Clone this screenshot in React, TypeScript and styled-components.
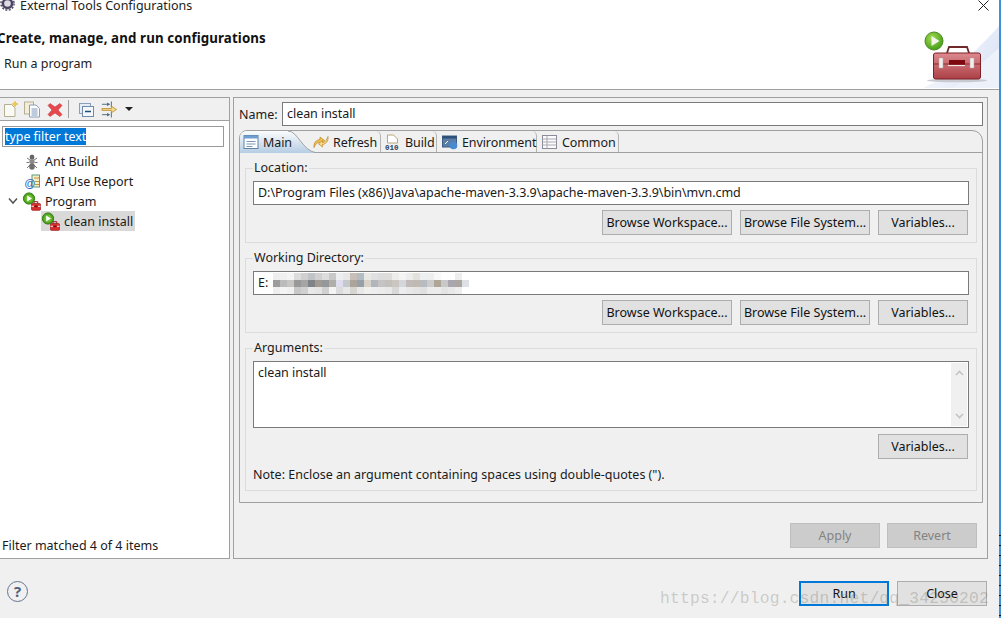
import React from "react";
import styled, { createGlobalStyle } from "styled-components";

const Global = createGlobalStyle`
  html, body { margin: 0; padding: 0; background: #f0f0f0; }
  body { font-family: "Noto Sans", "Open Sans", sans-serif; font-size: 12.5px; color: #1a1a1a; }
  * { box-sizing: border-box; }
`;

const Screen = styled.div`
  position: relative;
  width: 1001px;
  height: 618px;
  overflow: hidden;
  display: flex;
  background: #f0f0f0;
`;
const Win = styled.div`
  width: 999px;
  display: flex;
  flex-direction: column;
`;
const Edge = styled.div`
  width: 2px;
  display: flex;
  flex-direction: column;
  background: #3f8fd8;
`;
const EdgeTicks = styled.div`
  margin-top: auto;
  height: 92px;
  background: repeating-linear-gradient(#3f8fd8 0 9px, #111 9px 10px);
`;
const Banner = styled.header`
  position: relative;
  height: 90px;
  background: #fff;
  border-bottom: 1px solid #a0a0a0;
  display: flex;
  flex-direction: column;
`;
const TitleBar = styled.div`
  height: 11px;
  display: flex;
  align-items: center;
  gap: 5px;
  line-height: 11px;
  padding-right: 10px;
`;
const AppGlyph = styled.svg`
  width: 15px;
  height: 13px;
  flex: none;
`;
const WinTitle = styled.span`
  font-size: 12.5px;
  flex: 1;
  color: #222;
`;
const CloseGlyph = styled.svg`
  width: 11px;
  height: 11px;
`;
const Heading = styled.h1`
  margin: 18px 0 0 -3px;
  font-size: 13.3px;
  line-height: 18px;
  font-weight: 700;
  letter-spacing: 0.12px;
  color: #111;
`;
const Sub = styled.div`
  margin: 9px 0 0 4px;
  line-height: 16px;
  color: #222;
`;
const BannerArt = styled.svg`
  position: absolute;
  right: 0;
  bottom: 0;
  width: 76px;
  height: 65px;
`;
const Main = styled.main`
  flex: 1;
  min-height: 0;
  padding-top: 7px;
  display: flex;
  gap: 3px;
  padding-right: 11px;
`;
const LeftPanel = styled.section`
  width: 230px;
  display: flex;
  flex-direction: column;
  border: 1px solid #a0a0a0;
  border-left: none;
  background: #fff;
`;
const Toolbar = styled.div`
  height: 23px;
  background: #f0f0f0;
  border-bottom: 1px solid #a0a0a0;
  display: flex;
  align-items: center;
  padding: 0 0 0 3px;
  flex: none;
`;
const ToolIcon = styled.svg<{ $ml?: number; $w?: number }>`
  width: ${(p) => p.$w ?? 16}px;
  height: 18px;
  margin-left: ${(p) => p.$ml ?? 0}px;
  flex: none;
`;
const ToolSep = styled.div`
  width: 1px;
  height: 18px;
  background: #a0a0a0;
  margin: 0 10px 0 5px;
`;
const Caret = styled.div`
  width: 0;
  height: 0;
  margin-left: 7px;
  border-left: 4px solid transparent;
  border-right: 4px solid transparent;
  border-top: 4px solid #222;
`;
const FilterBox = styled.div`
  margin: 5px 5px 0 2px;
  height: 21px;
  border: 1px solid #999;
  display: flex;
  align-items: center;
  padding-left: 2px;
  flex: none;
`;
const FilterSel = styled.span`
  background: #0078d7;
  color: #fff;
  line-height: 17px;
  font-size: 12.4px;
`;
const Tree = styled.ul`
  list-style: none;
  margin: 4px 0 0;
  padding: 0;
  flex: 1;
`;
const Row = styled.li<{ $indent: number }>`
  height: 20px;
  padding-left: ${(p) => p.$indent}px;
  display: flex;
  align-items: center;
`;
const Pick = styled.span<{ $sel?: boolean }>`
  display: flex;
  align-items: center;
  gap: 4px;
  height: 20px;
  padding-right: 2px;
  background: ${(p) => (p.$sel ? "#d9d9d9" : "transparent")};
`;
const TreeGlyph = styled.svg`
  width: 19px;
  height: 19px;
  flex: none;
`;
const Twist = styled.svg`
  width: 10px;
  height: 8px;
  margin-right: 4px;
  flex: none;
`;
const FilterNote = styled.div`
  height: 25px;
  padding-left: 2px;
  line-height: 25px;
  flex: none;
`;
const RightPanel = styled.section`
  flex: 1;
  min-width: 0;
  border: 1px solid #a0a0a0;
  padding: 4px 4px 0 5px;
  display: flex;
  flex-direction: column;
`;
const NameRow = styled.div`
  display: flex;
  align-items: center;
  height: 24px;
`;
const NameLabel = styled.span`
  width: 43px;
  flex: none;
`;
const Field = styled.div`
  flex: 1;
  height: 24px;
  background: #fff;
  border: 1px solid #7a7a7a;
  padding-left: 4px;
  line-height: 21px;
  letter-spacing: -0.05px;
  overflow: hidden;
  position: relative;
  white-space: nowrap;
`;
const Folder = styled.div`
  margin-top: 4px;
  height: 373px;
  border: 1px solid #a0a0a0;
  border-radius: 8px 11px 0 0;
  display: flex;
  flex-direction: column;
  flex: none;
`;
const TabStrip = styled.div`
  height: 22px;
  flex: none;
  display: flex;
  border-bottom: 1px solid #a0a0a0;
`;
const ActiveTab = styled.div`
  position: relative;
  width: 72px;
  height: 22px;
  display: flex;
  align-items: center;
  gap: 4px;
  padding-left: 3px;
  flex: none;
`;
const ActiveShape = styled.svg`
  position: absolute;
  left: 0;
  top: -1px;
  width: 78px;
  height: 23px;
`;
const TabLabel = styled.span`
  position: relative;
  white-space: nowrap;
  letter-spacing: -0.1px;
`;
const Tab = styled.div<{ $w: number; $pad: number }>`
  position: relative;
  width: ${(p) => p.$w}px;
  height: 21px;
  display: flex;
  align-items: center;
  gap: 4px;
  padding: 1px 0 0 ${(p) => p.$pad}px;
  border-right: 1px solid #b4b4b4;
  border-top-right-radius: 5px;
  flex: none;
`;
const TabGlyph = styled.svg`
  position: relative;
  width: 16px;
  height: 16px;
  flex: none;
`;
const TabBody = styled.div`
  flex: 1;
  padding: 7px 5px 0;
  display: flex;
  flex-direction: column;
  gap: 7px;
`;
const Group = styled.fieldset`
  margin: 0;
  min-width: 0;
  border: 1px solid #dcdcdc;
  padding: 5px 7px 7px;
  display: block;
`;
const Legend = styled.legend`
  padding: 0 1px;
  line-height: 16px;
  height: 16px;
`;
const Buttons = styled.div<{ $mt?: number }>`
  display: flex;
  justify-content: flex-end;
  gap: 8px;
  margin-top: ${(p) => p.$mt ?? 5}px;
  padding-right: 1px;
`;
const Btn = styled.div<{ $w: number }>`
  width: ${(p) => p.$w}px;
  height: 25px;
  border: 1px solid #adadad;
  background: #e1e1e1;
  display: flex;
  align-items: center;
  justify-content: center;
  color: #111;
`;
const Disabled = styled(Btn)`
  background: #cccccc;
  border-color: #bfbfbf;
  color: #838383;
`;
const PrimaryBtn = styled(Btn)`
  border: 2px solid #0078d7;
`;
const Mosaic = styled.div`
  position: absolute;
  left: 19px;
  top: 1px;
  display: grid;
  grid-template-columns: repeat(28, 7px);
  grid-auto-rows: 7px;
`;
const Cell = styled.i<{ $c: string }>`
  display: block;
  background: ${(p) => p.$c};
`;
const ArgBox = styled.div`
  height: 67px;
  background: #fff;
  border: 1px solid #7a7a7a;
  display: flex;
`;
const ArgText = styled.div`
  flex: 1;
  padding: 2px 4px;
  line-height: 18px;
  letter-spacing: -0.05px;
`;
const Scroll = styled.div`
  width: 16px;
  margin: 1px 1px 1px 0;
  background: #f0f0f0;
  display: flex;
  flex-direction: column;
  justify-content: space-between;
  align-items: center;
  padding: 7px 0;
`;
const Chevron = styled.svg`
  width: 9px;
  height: 6px;
`;
const Note = styled.div`
  margin-top: 8px;
  line-height: 16px;
`;
const ApplyRow = styled.div`
  margin-top: 20px;
  padding-right: 6px;
  display: flex;
  justify-content: flex-end;
  gap: 7px;
`;
const Footer = styled.footer`
  height: 59px;
  flex: none;
  display: flex;
  padding: 22px 12px 0 6px;
`;
const Help = styled.div`
  width: 21px;
  height: 21px;
  margin-left: 1px;
  border-radius: 50%;
  border: 1.5px solid #66758f;
  color: #4f5f7d;
  font-weight: 700;
  font-size: 15px;
  line-height: 18px;
  text-align: center;
`;
const FooterBtns = styled.div`
  margin-left: auto;
  display: flex;
  gap: 8px;
  height: 26px;
`;
const Watermark = styled.div`
  position: absolute;
  left: 660px;
  top: 589px;
  font-size: 16.3px;
  line-height: 20px;
  letter-spacing: 0.2px;
  font-family: "Liberation Mono", monospace;
  color: rgba(110, 110, 95, 0.3);
  white-space: nowrap;
  pointer-events: none;
`;

const rows = [
  "#eee #f0f0f0 #f4f4f4 #dcdcdc #d0d0d0 #c0c4c8 #d0d0d0 #dcdcdc #c8c8c8 #eceef0 #e8e8e8 #c8c0b8 #b4bcc4 #e8e8e4 #e0e0e4 #dcdcdc #e0dcdc #ececec #f4f4f4 #ececec #e4e0dc #ecf0f0 #eee #f8f8f8 #fff #fff #eee #fff",
  "#9c9c9c #bbb #c8c6c2 #999 #a5a5a5 #7f8286 #a09a92 #95989b #b0aea8 #dde #c5c8cc #aca498 #96a0a8 #d8d2c8 #b0b6bc #c4c4c4 #c4c0bc #ccc6c2 #d4d6dc #c0bab8 #c0bab0 #b8bcc0 #ccc #b0a698 #c8c8c8 #aaa6b0 #aca6a0 #dde0e4",
  "#eee #f4f4f4 #f0f0f0 #c8c8c8 #d0d0d0 #e8e8e8 #e4e4e4 #d0d0d0 #f4f4f4 #dcdcdc #e8e8e8 #d8d4d0 #e8e8e8 #f0f0ee #eceef0 #ececec #e8e8e8 #d8d8d8 #ecedf0 #e8e8e8 #e4e4e2 #e0e0e0 #ececec #ececec #e4e4e4 #e8e8e8 #eee #fff",
];

const ProgramGlyph = () => (
  <TreeGlyph viewBox="0 0 19 19">
    <circle cx="7" cy="6.5" r="5.6" fill="#4fa31c" stroke="#2e7d12" strokeWidth="1" />
    <circle cx="7" cy="6.5" r="3.8" fill="#6cbd32" />
    <path d="M5.2 3.600l4.800 2.900-4.800 2.900z" fill="#fff" />
    <path d="M12 11.500v-1.800h3.800v1.800" fill="none" stroke="#8a1c1c" />
    <rect x="9.500" y="11.500" width="9" height="6.800" rx="1" fill="#dc3030" stroke="#9c1717" strokeWidth=".7" />
    <path d="M9.500 14.300h2.800M15.700 14.300h2.800" stroke="#fff" strokeWidth=".9" />
    <rect x="12.300" y="13.600" width="3.400" height="1.600" fill="#7a0c0c" />
  </TreeGlyph>
);

const Group1 = ({ legend, children }: { legend: string; children: React.ReactNode }) => (
  <Group>
    <Legend>{legend}</Legend>
    {children}
  </Group>
);

const TripleButtons = () => (
  <Buttons>
    <Btn $w={130}>Browse Workspace...</Btn>
    <Btn $w={130}>Browse File System...</Btn>
    <Btn $w={90}>Variables...</Btn>
  </Buttons>
);

export default function App() {
  return (
    <Screen>
      <Global />
      <Win>
        <Banner>
          <TitleBar>
            <AppGlyph viewBox="0 0 15 13">
              <circle cx="7.500" cy="4.500" r="5.800" fill="#4b4460" />
              <circle cx="7.500" cy="4.500" r="6.600" fill="none" stroke="#4b4460" strokeWidth="1.400" strokeDasharray="2 1.500" />
              <circle cx="7.500" cy="4.500" r="3.300" fill="#dcdae4" />
            </AppGlyph>
            <WinTitle>External Tools Configurations</WinTitle>
            <CloseGlyph viewBox="0 0 11 11">
              <path d="M.5.5l10 10M10.500.5l-10 10" stroke="#222" strokeWidth="1" />
            </CloseGlyph>
          </TitleBar>
          <Heading>Create, manage, and run configurations</Heading>
          <Sub>Run a program</Sub>
          <BannerArt viewBox="0 0 76 65">
            <defs>
              <linearGradient id="sky" x1="0" y1="0" x2="1" y2="0.5">
                <stop offset="0" stopColor="#ffffff" />
                <stop offset="1" stopColor="#dde5f6" />
              </linearGradient>
              <linearGradient id="box" x1="0" y1="0" x2="0" y2="1">
                <stop offset="0" stopColor="#dc8a8e" />
                <stop offset="1" stopColor="#ac4047" />
              </linearGradient>
              <radialGradient id="gr" cx="0.4" cy="0.35" r="0.7">
                <stop offset="0" stopColor="#a6dc50" />
                <stop offset="1" stopColor="#3f9a17" />
              </radialGradient>
            </defs>
            <path d="M0 64C30 50 50 30 76 2V64z" fill="url(#sky)" />
            <path d="M30 64C48 50 62 36 76 24V64z" fill="#edf1fa" />
            <ellipse cx="34" cy="56.500" rx="30" ry="1.800" fill="#c9c9d2" />
            <circle cx="11" cy="17" r="9" fill="url(#gr)" stroke="#4d8a22" strokeWidth="1" />
            <path d="M8.500 12l8 5-8 5z" fill="#f2f6ea" />
            <path d="M24 29l2-6h18l2 6" fill="none" stroke="#6e2a2a" strokeWidth="1.800" />
            <rect x="10.500" y="29" width="47" height="26" rx="2" fill="url(#box)" stroke="#7d2126" strokeWidth="1" />
            <path d="M11 40h46" stroke="#8d2c30" strokeWidth="1" />
            <rect x="16" y="34" width="4" height="10" fill="#f1eeee" stroke="#b7a5a5" strokeWidth=".5" />
            <rect x="47" y="34" width="4" height="10" fill="#f1eeee" stroke="#b7a5a5" strokeWidth=".5" />
            <rect x="26" y="36" width="16" height="6" fill="#7e0a10" />
            <path d="M25 41.500h17" stroke="#f6e9e9" strokeWidth="1.200" />
          </BannerArt>
        </Banner>
        <Main>
          <LeftPanel>
            <Toolbar>
              <ToolIcon viewBox="0 0 16 18">
                <path d="M1.500 4.500h7l3.500 3.500v8.500h-10.500z" fill="#fbfbf6" stroke="#b5ae94" />
                <path d="M12 1l.9 2.100 2.100.9-2.100.9-.9 2.100-.9-2.100-2.100-.9 2.100-.9z" fill="#f2c94c" stroke="#d8a829" strokeWidth=".4" />
              </ToolIcon>
              <ToolIcon viewBox="0 0 16 18" $ml={5}>
                <rect x=".5" y="2" width="9" height="12" fill="#f3eed9" stroke="#b5ae94" />
                <path d="M5.500 5h6.500l3.500 3.500v8.500h-10z" fill="#fdfdfb" stroke="#8a9cb8" />
                <path d="M7.500 9h6M7.500 11h6M7.500 13h6M7.500 15h6" stroke="#7f98c0" />
              </ToolIcon>
              <ToolIcon viewBox="0 0 16 18" $ml={7}>
                <path d="M3 3.500L8 7l5-3.500 2 2L11 10l4 4.500-2 2L8 13l-5 3.500-2-2L5 10 1 5.500z" fill="#e6484c" stroke="#c23a3e" strokeWidth=".6" />
              </ToolIcon>
              <ToolSep />
              <ToolIcon viewBox="0 0 16 18">
                <rect x=".5" y="3.500" width="11" height="10" fill="#e4ecf5" stroke="#8aa0ba" />
                <rect x="3.500" y="6.500" width="11" height="10" fill="#f4f7fb" stroke="#6d8cab" />
                <path d="M6 11.500h6" stroke="#1f4e79" strokeWidth="1.500" />
              </ToolIcon>
              <ToolIcon viewBox="0 0 18 18" $ml={6} $w={17}>
                <path d="M1 4h8M1 15h8" stroke="#4c6b84" strokeWidth="1" />
                <path d="M6.500 2l3 2-3 2zM6.500 13l3 2-3 2z" fill="#4c6b84" />
                <path d="M11 1v6M11 12v6" stroke="#4c6b84" />
                <path d="M1 8.500h10V6l5.500 3.500-5.500 3.500v-2.500H1z" fill="#f4d88a" stroke="#b6862a" strokeWidth=".8" />
              </ToolIcon>
              <Caret />
            </Toolbar>
            <FilterBox>
              <FilterSel>type filter text</FilterSel>
            </FilterBox>
            <Tree>
              <Row $indent={22}>
                <Pick>
                  <TreeGlyph viewBox="0 0 19 19">
                    <g stroke="#555" strokeWidth=".8" fill="none">
                      <path d="M5 6l3 2M15 6l-3 2M4.500 10.500h3M15.500 10.500h-3M5 16l3-3M15 16l-3-3" />
                    </g>
                    <ellipse cx="10" cy="5" rx="2.400" ry="2.500" fill="#666" />
                    <ellipse cx="10" cy="9.500" rx="2.600" ry="2.400" fill="#8a8a8a" />
                    <ellipse cx="10" cy="14.500" rx="2.800" ry="3.300" fill="#6f6f6f" />
                  </TreeGlyph>
                  <span>Ant Build</span>
                </Pick>
              </Row>
              <Row $indent={22}>
                <Pick>
                  <TreeGlyph viewBox="0 0 19 19">
                    <rect x="10" y="3" width="7.500" height="12" fill="#f5ecc8" stroke="#5d9a80" />
                    <path d="M12 6h5M13 9.500h4M13 12.500h4" stroke="#c7953d" />
                    <text x="2.500" y="14.500" fontFamily="Liberation Sans" fontWeight="700" fontSize="11" fill="#2a6cc0">@</text>
                  </TreeGlyph>
                  <span>API Use Report</span>
                </Pick>
              </Row>
              <Row $indent={8}>
                <Twist viewBox="0 0 10 8">
                  <path d="M1 1.500l4 4.500 4-4.500" fill="none" stroke="#555" strokeWidth="1.500" />
                </Twist>
                <Pick>
                  <ProgramGlyph />
                  <span>Program</span>
                </Pick>
              </Row>
              <Row $indent={41}>
                <Pick $sel>
                  <ProgramGlyph />
                  <span>clean install</span>
                </Pick>
              </Row>
            </Tree>
            <FilterNote>Filter matched 4 of 4 items</FilterNote>
          </LeftPanel>
          <RightPanel>
            <NameRow>
              <NameLabel>Name:</NameLabel>
              <Field>clean install</Field>
            </NameRow>
            <Folder>
              <TabStrip>
                <ActiveTab>
                  <ActiveShape viewBox="0 0 78 23">
                    <defs>
                      <linearGradient id="act" x1="0" y1="0" x2="0" y2="1">
                        <stop offset="0" stopColor="#fbfcfd" />
                        <stop offset="1" stopColor="#b5cde3" />
                      </linearGradient>
                    </defs>
                    <path d="M0 23V8Q0 1 8 1H48C58 1 62 21 77 23Z" fill="url(#act)" />
                    <path d="M48 1C58 1 62 21 77 23" fill="none" stroke="#a0a0a0" />
                  </ActiveShape>
                  <TabGlyph viewBox="0 0 16 16">
                    <rect x="1" y="1.500" width="14" height="13" fill="#fff" stroke="#5f83a6" />
                    <rect x="1" y="1.500" width="14" height="3" fill="#6f9fd0" />
                    <path d="M3.500 7.500h9M3.500 10h9M3.500 12.500h6" stroke="#7a96b4" />
                  </TabGlyph>
                  <TabLabel>Main</TabLabel>
                </ActiveTab>
                <Tab $w={69} $pad={1}>
                  <TabGlyph viewBox="0 0 16 16">
                    <path d="M1 13.500C.5 9 3 6 7 5.500V3l4.500 3.500L7 10V8C4.500 8 2.500 10 1 13.500z" fill="#f0c255" stroke="#bb8420" strokeWidth=".7" />
                    <path d="M15 2.500c.5 4.500-2 7.500-5.500 8v2.500L5.500 9.800 9.500 6.500v2c2.500 0 4-2.500 5.500-6z" fill="#f7d98c" stroke="#bb8420" strokeWidth=".7" />
                  </TabGlyph>
                  <TabLabel>Refresh</TabLabel>
                </Tab>
                <Tab $w={56} $pad={4}>
                  <TabGlyph viewBox="0 0 16 16">
                    <path d="M2.500 1h6l4 4v4H2.500z" fill="#fff" stroke="#b9a77a" />
                    <text x="0" y="15.500" fontFamily="Liberation Mono" fontWeight="700" fontSize="7.500" fill="#24405c">010</text>
                  </TabGlyph>
                  <TabLabel>Build</TabLabel>
                </Tab>
                <Tab $w={100} $pad={5}>
                  <TabGlyph viewBox="0 0 16 16">
                    <rect x=".5" y="2" width="14" height="11" fill="#5c7ea6" stroke="#3d5d82" />
                    <rect x=".5" y="2" width="14" height="2.500" fill="#2e4f78" />
                    <path d="M3 10l3-3" stroke="#fff" />
                    <circle cx="11.500" cy="11.500" r="3.800" fill="#4a8ad0" />
                  </TabGlyph>
                  <TabLabel>Environment</TabLabel>
                </Tab>
                <Tab $w={82} $pad={5}>
                  <TabGlyph viewBox="0 0 16 16">
                    <rect x=".5" y="1.500" width="14" height="13" fill="#fbfbfb" stroke="#8a8a9a" />
                    <path d="M.5 5h14M.5 8h14M.5 11h14M5 1.500v13" stroke="#a8a8b4" />
                  </TabGlyph>
                  <TabLabel>Common</TabLabel>
                </Tab>
              </TabStrip>
              <TabBody>
                <Group1 legend="Location:">
                  <Field>D:\Program Files (x86)\Java\apache-maven-3.3.9\apache-maven-3.3.9\bin\mvn.cmd</Field>
                  <TripleButtons />
                </Group1>
                <Group1 legend="Working Directory:">
                  <Field>
                    E:
                    <Mosaic>
                      {rows.flatMap((r, i) =>
                        r.split(" ").map((c, j) => <Cell key={`${i}-${j}`} $c={c} />)
                      )}
                    </Mosaic>
                  </Field>
                  <TripleButtons />
                </Group1>
                <Group1 legend="Arguments:">
                  <ArgBox>
                    <ArgText>clean install</ArgText>
                    <Scroll>
                      <Chevron viewBox="0 0 9 6">
                        <path d="M1 5l3.500-3.500L8 5" fill="none" stroke="#c4c4c4" strokeWidth="1.600" />
                      </Chevron>
                      <Chevron viewBox="0 0 9 6">
                        <path d="M1 1l3.500 3.500L8 1" fill="none" stroke="#c4c4c4" strokeWidth="1.600" />
                      </Chevron>
                    </Scroll>
                  </ArgBox>
                  <Buttons $mt={6}>
                    <Btn $w={90}>Variables...</Btn>
                  </Buttons>
                  <Note>Note: Enclose an argument containing spaces using double-quotes (").</Note>
                </Group1>
              </TabBody>
            </Folder>
            <ApplyRow>
              <Disabled $w={90}>Apply</Disabled>
              <Disabled $w={90}>Revert</Disabled>
            </ApplyRow>
          </RightPanel>
        </Main>
        <Footer>
          <Help>?</Help>
          <FooterBtns>
            <PrimaryBtn $w={90}>Run</PrimaryBtn>
            <Btn $w={90}>Close</Btn>
          </FooterBtns>
        </Footer>
      </Win>
      <Edge>
        <EdgeTicks />
      </Edge>
      <Watermark>https://blog.csdn.net/qq_34250202</Watermark>
    </Screen>
  );
}
